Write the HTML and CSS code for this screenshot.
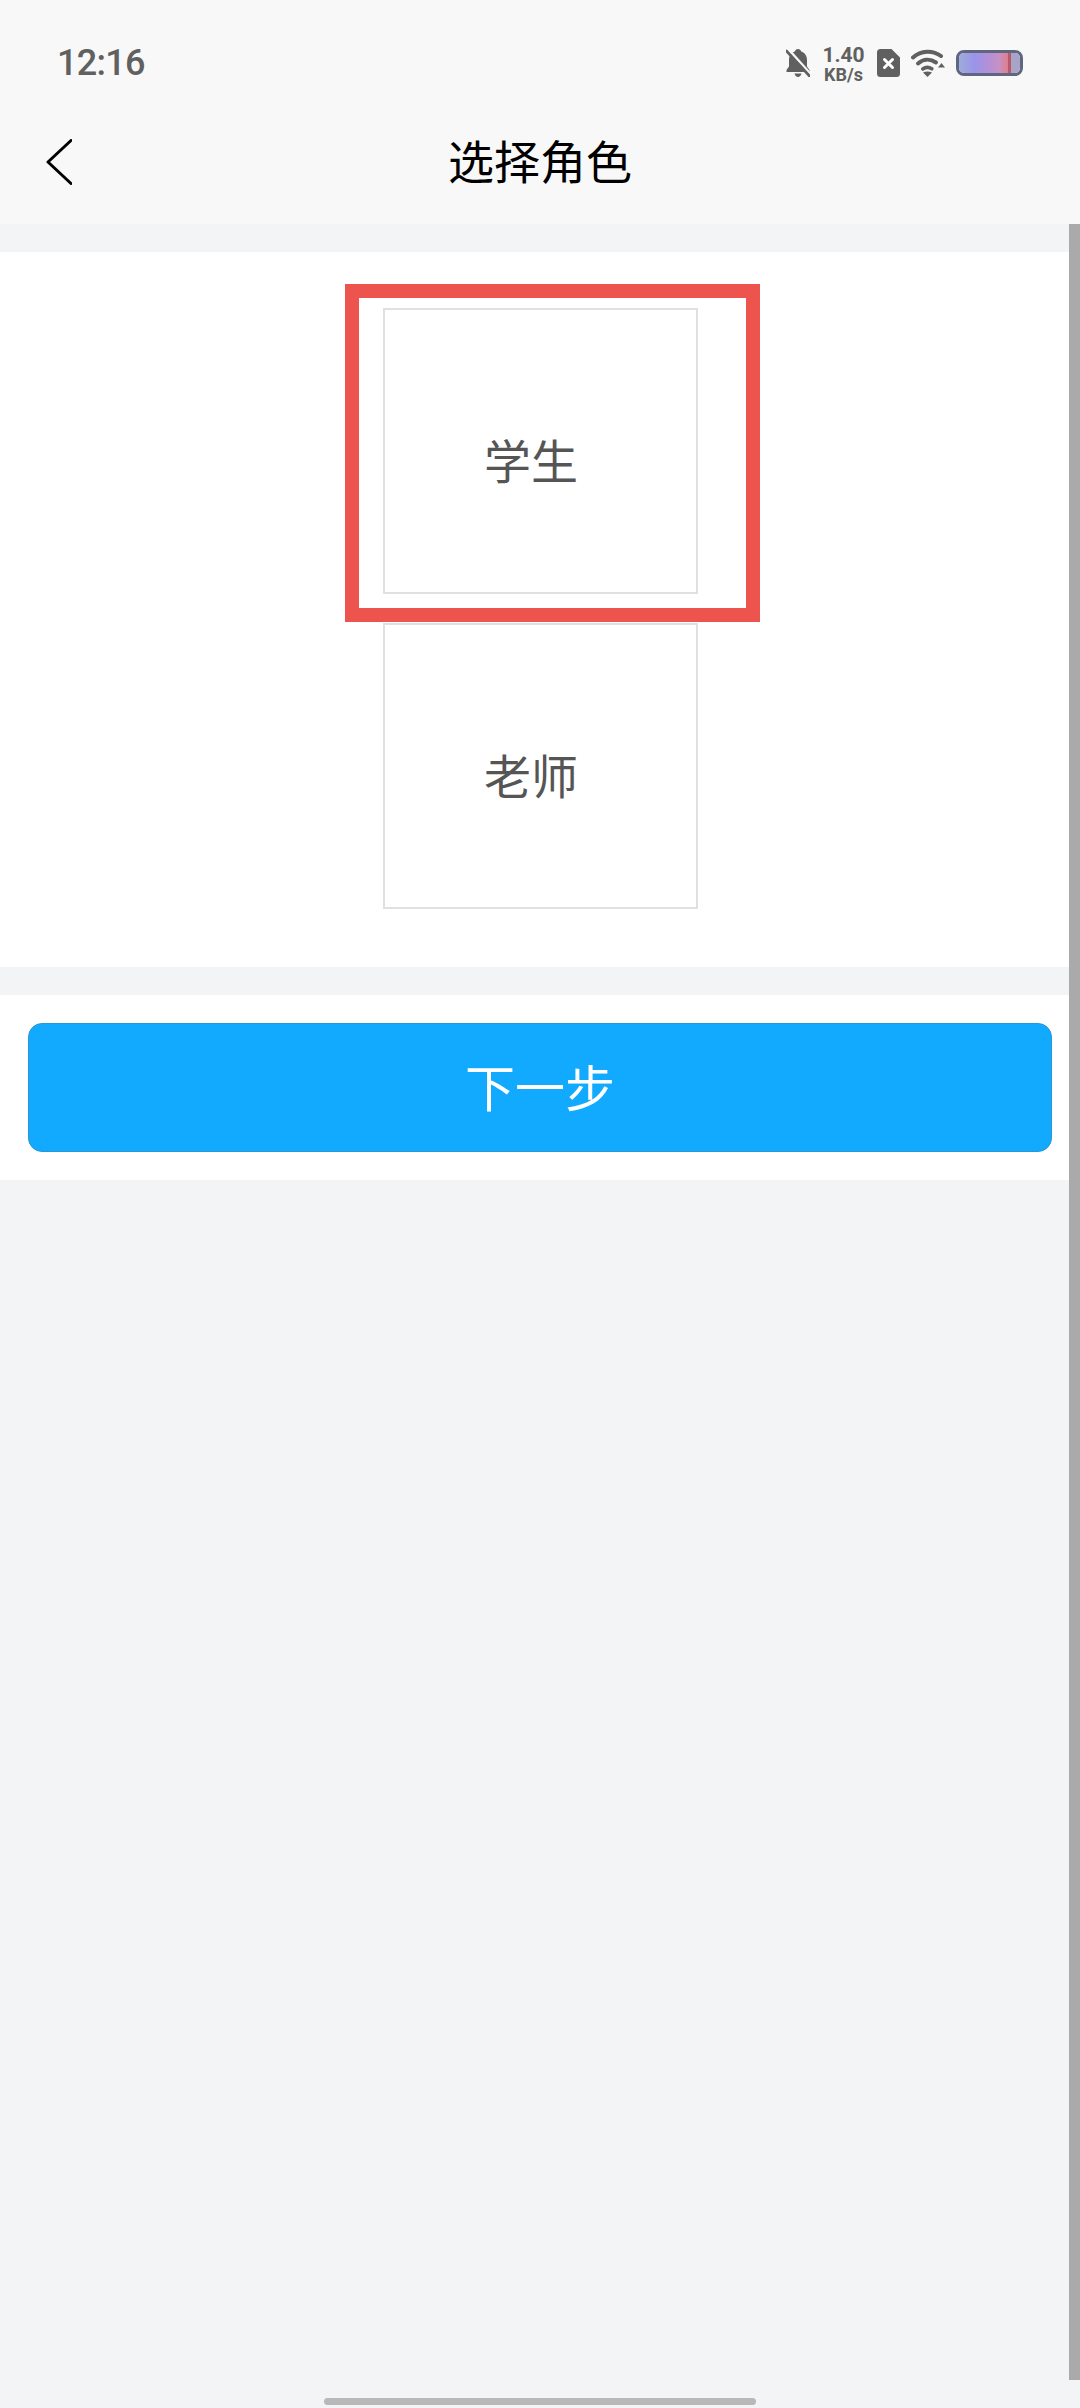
FILE: index.html
```html
<!DOCTYPE html>
<html lang="zh">

<head>
    <meta charset="utf-8">
    <title>选择角色</title>
    <link rel="stylesheet" href="styles.css">
</head>

<body>
    <div class="header">
        <div class="status-bar">
            <span class="time">12:16</span>
            <div class="status-icons">
                <svg class="icon-bell" viewBox="0 0 24 28">
                    <path d="M12 0c-1.600 0-2.800 1-3.200 2.400C5.200 3.500 3 6.800 3 11v6.500L.5 21v2h23v-2L21 17.500V11c0-4.200-2.200-7.500-5.800-8.600C14.800 1 13.600 0 12 0zM8.500 24.500c.5 2 1.900 3.500 3.500 3.500s3-1.500 3.500-3.500z" fill="#606060" />
                    <path d="M2.500 0.500L25 25.500" stroke="#f8f8f8" stroke-width="2.600" />
                    <path d="M0.500 2L23.500 27" stroke="#606060" stroke-width="2.600" stroke-linecap="round" />
                </svg>
                <div class="net-speed">
                    <span class="net-value">1.40</span>
                    <span class="net-unit">KB/s</span>
                </div>
                <svg class="icon-sim" viewBox="0 0 23 28">
                    <path d="M3.500 0H14.500L23 8.500V24.500a3.500 3.500 0 0 1-3.500 3.500H3.500A3.500 3.500 0 0 1 0 24.500V3.500A3.500 3.500 0 0 1 3.500 0z" fill="#606060" />
                    <path d="M7.500 10.500L15.500 18.500M15.500 10.500L7.500 18.500" stroke="#fff" stroke-width="3" stroke-linecap="round" />
                </svg>
                <svg class="icon-wifi" viewBox="0 0 34 28">
                    <path d="M2 8.500C10 1 22 1 30 7" fill="none" stroke="#606060" stroke-width="4" stroke-linecap="round" />
                    <path d="M7 14.500C12.500 9.800 19.500 9.800 25 13.500" fill="none" stroke="#606060" stroke-width="4" stroke-linecap="round" />
                    <path d="M11.800 20C14.500 18 18 18 20.800 19.800" fill="none" stroke="#606060" stroke-width="3.600" stroke-linecap="round" />
                    <path d="M12 23.500C15 22 18 22 21 23.500L16.500 28z" fill="#606060" />
                    <path d="M27 18.500h7L30.500 14z" fill="#606060" />
                </svg>
                <div class="battery"><div class="battery-fill"></div></div>
            </div>
        </div>
        <div class="nav-bar">
            <svg class="icon-back" viewBox="0 0 26 46">
                <path d="M25 1.500L2 23L25 44.500" fill="none" stroke="#000" stroke-width="3" stroke-linecap="round" stroke-linejoin="round" />
            </svg>
            <h1 class="title">选择角色</h1>
        </div>
    </div>

    <div class="section role-list">
        <div class="role-card">学生</div>
        <div class="role-card">老师</div>
    </div>

    <div class="section action">
        <button class="next-button">下一步</button>
    </div>

    <!-- 选中框、滚动条、底部横条 -->
    <div class="highlight"></div>
    <div class="scrollbar"></div>
    <div class="home-bar"></div>
</body>

</html>
```

FILE: styles.css
```css
html,
body {
    margin: 0;
    height: 2408px;
    overflow: hidden;
}

body {
    position: relative;
    background-color: #f3f4f6;
    font-family: "Noto Sans CJK SC", "Noto Sans", sans-serif;
}

.header {
    height: 224px;
    background-color: #f8f8f8;
}

.status-bar {
    height: 74px;
    padding: 26px 57px 0 57px;
    display: flex;
    align-items: center;
    justify-content: space-between;
}

.time {
    font-family: "Roboto", sans-serif;
    font-size: 36px;
    font-weight: 500;
    letter-spacing: -0.7px;
    color: #606060;
}

.status-icons {
    display: flex;
    align-items: center;
    gap: 11px;
}

.icon-bell {
    width: 24px;
    height: 28px;
}

.net-speed {
    width: 45px;
    padding-top: 3px;
    display: flex;
    flex-direction: column;
    align-items: center;
    font-family: "Roboto", sans-serif;
    font-weight: 700;
    color: #606060;
}

.net-value {
    font-size: 21px;
    line-height: 20px;
}

.net-unit {
    font-size: 18px;
    line-height: 20px;
}

.icon-sim {
    width: 23px;
    height: 28px;
}

.icon-wifi {
    width: 34px;
    height: 28px;
}

.battery {
    width: 67px;
    height: 26px;
    box-sizing: border-box;
    border: 3px solid #5f6680;
    border-radius: 8px;
}

.battery-fill {
    height: 100%;
    border-radius: 5px;
    background: linear-gradient(90deg, #a0acd8, #9a94ea 25%, #b490d4 50%, #c890c4 66%, #dc8090 79%, #dc8090 81%, #b85868 81%, #b85868 85%, #a8a4c8 86%, #a8a4c8 100%);
}

.nav-bar {
    height: 124px;
    padding-left: 46px;
    display: flex;
    align-items: center;
    position: relative;
}

.icon-back {
    width: 26px;
    height: 46px;
}

.title {
    position: absolute;
    left: 0;
    right: 0;
    margin: 0;
    padding-bottom: 6px;
    text-align: center;
    font-size: 46px;
    font-weight: 400;
    color: #000;
}

.section {
    background-color: #fff;
}

.role-list {
    margin-top: 28px;
    height: 715px;
    padding-top: 56px;
    box-sizing: border-box;
    display: flex;
    flex-direction: column;
    align-items: center;
    gap: 29px;
}

.role-card {
    width: 315px;
    height: 286px;
    box-sizing: border-box;
    border: 2px solid #e0e0e0;
    padding: 14px 18px 0 0;
    display: flex;
    align-items: center;
    justify-content: center;
    font-size: 47px;
    color: #555;
}

.action {
    margin-top: 28px;
    height: 185px;
    padding: 28px;
    box-sizing: border-box;
}

.next-button {
    width: 100%;
    height: 129px;
    box-sizing: border-box;
    padding: 0 0 5px;
    background-color: #11aaff;
    border: 1px solid #2a96d2;
    border-radius: 14px;
    color: #fff;
    font-family: inherit;
    font-size: 50px;
}

.highlight {
    position: absolute;
    left: 345px;
    top: 284px;
    width: 415px;
    height: 338px;
    box-sizing: border-box;
    border: 14px solid #ee544e;
}

.scrollbar {
    position: absolute;
    right: 0;
    top: 224px;
    width: 11px;
    height: 2156px;
    background-color: #aaa;
}

.home-bar {
    position: absolute;
    left: 324px;
    top: 2398px;
    width: 432px;
    height: 7px;
    border-radius: 4px;
    background-color: #b8b8b8;
}
```
